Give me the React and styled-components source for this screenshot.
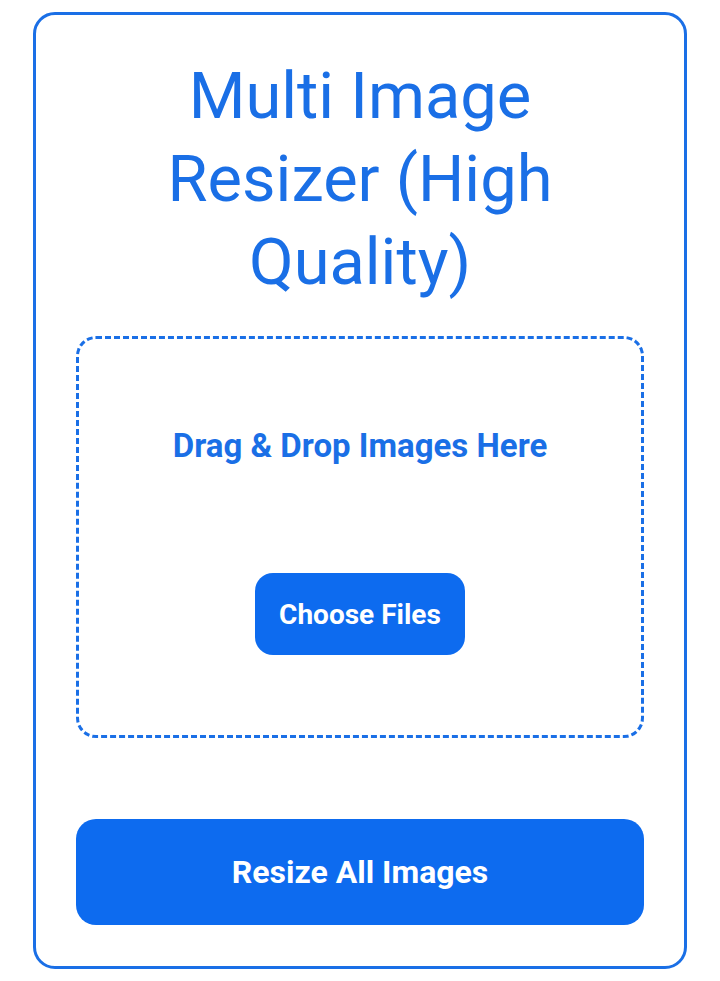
import styled, { createGlobalStyle } from "styled-components";

const GlobalStyle = createGlobalStyle`
  html, body {
    margin: 0;
    padding: 0;
    background: #fff;
  }
  body {
    font-family: Roboto, "Liberation Sans", Arial, sans-serif;
  }
`;

const Page = styled.div`
  padding: 12px 33px;
`;

const Card = styled.div`
  border: 3px solid #1a6fe6;
  border-radius: 22px;
  padding: 40px 40px 41px;
  display: flex;
  flex-direction: column;
  background: #fff;
`;

const Title = styled.h1`
  margin: 0 0 32px;
  padding: 0 20px;
  text-align: center;
  color: #1a6fe6;
  font-size: 65px;
  font-weight: 400;
  line-height: 83px;
`;

const DropZone = styled.div`
  border: 3px dashed #1a6fe6;
  border-radius: 20px;
  padding: 88px 20px 80px;
  display: flex;
  flex-direction: column;
  align-items: center;
`;

const DropText = styled.p`
  margin: 0 0 108px;
  color: #1a6fe6;
  font-size: 33px;
  font-weight: 700;
  line-height: 38px;
`;

const Button = styled.button`
  border: none;
  background: #0d6bef;
  color: #fff;
  font-family: inherit;
  font-weight: 700;
  cursor: pointer;
  width: ${(p) => (p.$wide ? "100%" : "210px")};
  height: ${(p) => (p.$wide ? "106px" : "82px")};
  border-radius: ${(p) => (p.$wide ? "20px" : "18px")};
  font-size: ${(p) => (p.$wide ? "32px" : "28px")};
  margin-top: ${(p) => (p.$wide ? "81px" : "0")};
`;

const App = () => {
  return (
    <>
      <GlobalStyle />
      <Page>
        <Card>
          <Title>Multi Image Resizer (High Quality)</Title>
          <DropZone>
            <DropText>Drag &amp; Drop Images Here</DropText>
            <Button>Choose Files</Button>
          </DropZone>
          <Button $wide>Resize All Images</Button>
        </Card>
      </Page>
    </>
  );
};

export default App;
